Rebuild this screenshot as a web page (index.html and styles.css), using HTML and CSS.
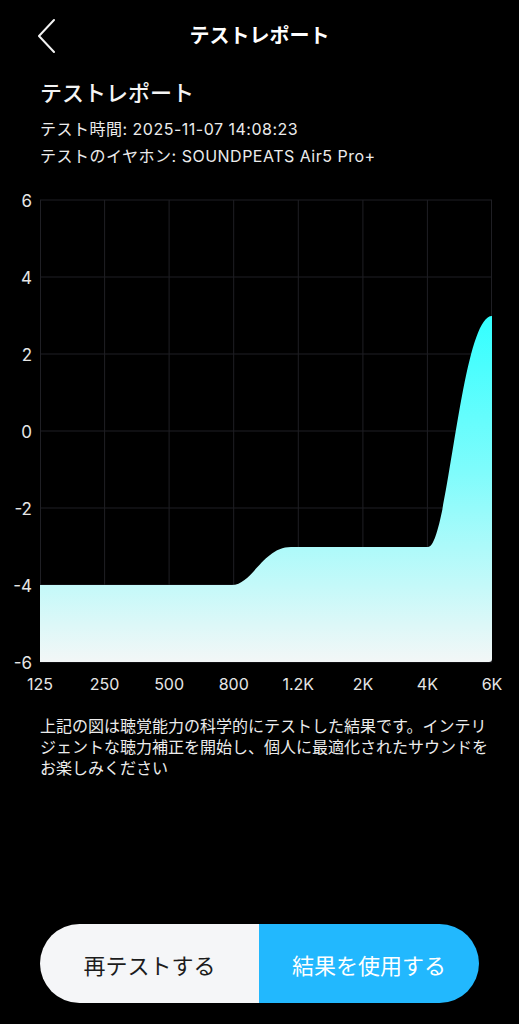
FILE: index.html
```html
<!DOCTYPE html>
<html lang="ja">
<head>
<meta charset="utf-8">
<title>テストレポート</title>
<link rel="stylesheet" href="styles.css">
</head>
<body>
<div class="page">
  <header class="topbar">
    <div class="back">
      <svg width="20" height="36" viewBox="0 0 20 36" aria-hidden="true">
        <polyline points="16,2 1,18 16,34" fill="none" stroke="#f2f2f2" stroke-width="2" stroke-linecap="round" stroke-linejoin="round"/>
      </svg>
    </div>
    <h1 class="title">テストレポート</h1>
    <div></div>
  </header>

  <section class="info">
    <h2 class="heading">テストレポート</h2>
    <p class="meta">テスト時間: 2025-11-07 14:08:23</p>
    <p class="meta">テストのイヤホン: SOUNDPEATS Air5 Pro+</p>
  </section>

  <svg class="chart" width="519" height="510" viewBox="0 190 519 510">
    <defs>
      <linearGradient id="fillGrad" gradientUnits="userSpaceOnUse" x1="0" y1="317" x2="0" y2="663">
        <stop offset="0" stop-color="#33ffff"/>
        <stop offset="0.45" stop-color="#7ffcfc"/>
        <stop offset="1" stop-color="#f3f7f7"/>
      </linearGradient>
    </defs>
    <g class="grid">
      <line x1="40" y1="201" x2="492" y2="201"/>
      <line x1="40" y1="278" x2="492" y2="278"/>
      <line x1="40" y1="355" x2="492" y2="355"/>
      <line x1="40" y1="432" x2="492" y2="432"/>
      <line x1="40" y1="509" x2="492" y2="509"/>
      <line x1="40" y1="586" x2="492" y2="586"/>
      <line x1="40" y1="663" x2="492" y2="663"/>
      <line x1="40.5" y1="201" x2="40.5" y2="663"/>
      <line x1="104.6" y1="201" x2="104.6" y2="663"/>
      <line x1="169.1" y1="201" x2="169.1" y2="663"/>
      <line x1="233.7" y1="201" x2="233.7" y2="663"/>
      <line x1="298.3" y1="201" x2="298.3" y2="663"/>
      <line x1="362.9" y1="201" x2="362.9" y2="663"/>
      <line x1="427.4" y1="201" x2="427.4" y2="663"/>
      <line x1="491.5" y1="201" x2="491.5" y2="663"/>
    </g>
    <path d="M40,586 L232,586 C252,586 263,548 291,548 L428,548 C448,548 461,317 492,317 L492,660 Q492,663 489,663 L40,663 Z" fill="url(#fillGrad)"/>
    <g class="ylabels">
      <text x="32" y="202">6</text>
      <text x="32" y="279">4</text>
      <text x="32" y="356">2</text>
      <text x="32" y="433">0</text>
      <text x="32" y="510">-2</text>
      <text x="32" y="587">-4</text>
      <text x="32" y="664">-6</text>
    </g>
    <g class="xlabels">
      <text x="40" y="685">125</text>
      <text x="104.6" y="685">250</text>
      <text x="169.1" y="685">500</text>
      <text x="233.7" y="685">800</text>
      <text x="298.3" y="685">1.2K</text>
      <text x="362.9" y="685">2K</text>
      <text x="427.4" y="685">4K</text>
      <text x="492" y="685">6K</text>
    </g>
  </svg>

  <p class="note">上記の図は聴覚能力の科学的にテストした結果です。インテリジェントな聴力補正を開始し、個人に最適化されたサウンドをお楽しみください</p>

  <div class="actions">
    <button class="btn btn-retest">再テストする</button>
    <button class="btn btn-use">結果を使用する</button>
  </div>
</div>
</body>
</html>
```

FILE: styles.css
```css
* { box-sizing: border-box; }

html, body {
  margin: 0;
  padding: 0;
  background: #000;
}

body {
  font-family: Inter, "Noto Sans CJK JP", sans-serif;
  color: #f2f2f2;
}

.page {
  width: 519px;
  min-height: 1024px;
  display: flex;
  flex-direction: column;
}

.topbar {
  height: 72px;
  display: grid;
  grid-template-columns: 1fr auto 1fr;
  align-items: center;
}

.back {
  padding-left: 38px;
  display: flex;
  align-items: center;
}

.back svg { display: block; }

.title {
  margin: 0;
  font-size: 20px;
  line-height: 28px;
  font-weight: 700;
  color: #fff;
}

.info {
  padding: 0 40px;
  margin-top: 6px;
}

.heading {
  margin: 0 0 8px;
  font-size: 22px;
  line-height: 30px;
  font-weight: 500;
  color: #f4f4f4;
}

.meta {
  margin: 0;
  font-size: 16px;
  line-height: 27px;
  letter-spacing: 0.5px;
  color: #ececec;
}

.chart {
  display: block;
  margin-top: 19px;
}

.grid line {
  stroke: #1f1f24;
  stroke-width: 1;
}

.ylabels text {
  font-family: Inter, sans-serif;
  font-size: 17px;
  fill: #e6e6e6;
  text-anchor: end;
  dominant-baseline: central;
}

.xlabels text {
  font-family: Inter, sans-serif;
  font-size: 16px;
  fill: #e6e6e6;
  text-anchor: middle;
  dominant-baseline: central;
}

.note {
  margin: 17px 0 0;
  padding: 0 27px 0 40px;
  font-size: 16px;
  line-height: 21px;
  color: #ececec;
}

.actions {
  margin: auto 40px 21px;
  height: 79px;
  display: grid;
  grid-template-columns: 219px 1fr;
  border-radius: 40px;
  overflow: hidden;
}

.btn {
  border: none;
  margin: 0;
  font-family: "Noto Sans CJK JP", sans-serif;
  font-size: 22px;
  font-weight: 400;
  cursor: pointer;
}

.btn-retest {
  background: #f5f6f8;
  color: #1c1c1c;
}

.btn-use {
  background: #22b8fe;
  color: #fff;
}
```
